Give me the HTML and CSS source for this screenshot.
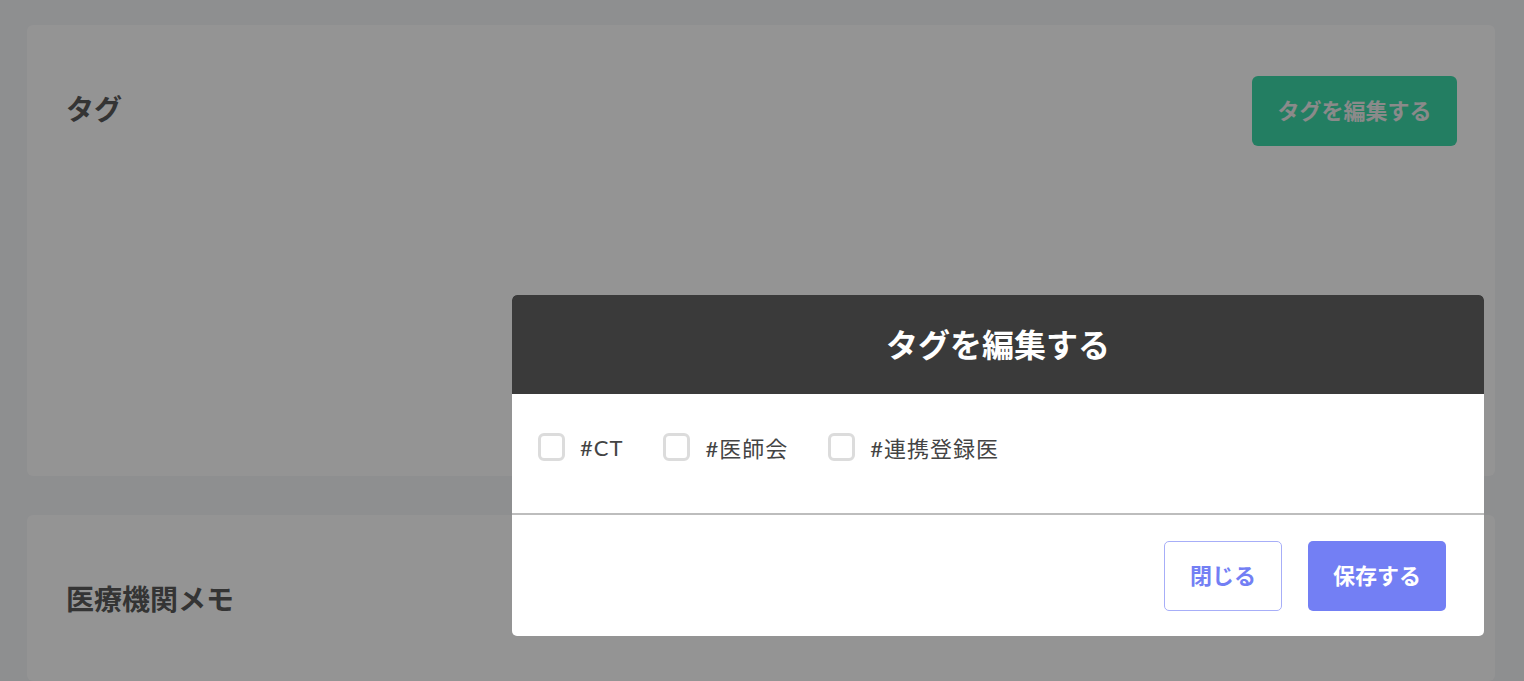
FILE: index.html
```html
<!DOCTYPE html>
<html lang="ja">
<head>
<meta charset="utf-8">
<title>タグを編集する</title>
<link rel="stylesheet" href="styles.css">
</head>
<body>
<main class="page">
  <section class="card card-tags">
    <div class="card-head">
      <h2 class="card-title">タグ</h2>
      <button class="btn-green" type="button">タグを編集する</button>
    </div>
  </section>
  <section class="card card-memo">
    <div class="card-head">
      <h2 class="card-title">医療機関メモ</h2>
    </div>
  </section>
</main>

<div class="overlay"></div>

<div class="modal">
  <div class="modal-header">タグを編集する</div>
  <div class="modal-body">
    <label class="tag"><span class="box"></span><span class="tag-text">#CT</span></label>
    <label class="tag"><span class="box"></span><span class="tag-text">#医師会</span></label>
    <label class="tag"><span class="box"></span><span class="tag-text">#連携登録医</span></label>
  </div>
  <div class="modal-footer">
    <button class="btn-outline" type="button">閉じる</button>
    <button class="btn-primary" type="button">保存する</button>
  </div>
</div>
</body>
</html>
```
FILE: styles.css
```css
* { box-sizing: border-box; }
html, body { margin: 0; padding: 0; }
body {
  width: 1524px;
  height: 681px;
  overflow: hidden;
  background: #f5f6f8;
  font-family: "Lato", "Noto Sans CJK JP", sans-serif;
  position: relative;
}
.page {
  padding: 25px 29px 0 27px;
  display: flex;
  flex-direction: column;
  gap: 39px;
}
.card {
  background: #ffffff;
  border-radius: 6px;
  padding: 48px 38px 0 39px;
}
.card-tags { height: 451px; }
.card-memo { height: 166px; }
.card-head {
  display: flex;
  justify-content: space-between;
  align-items: flex-start;
}
.card-title {
  margin: 0;
  font-size: 28px;
  line-height: 70px;
  font-weight: 700;
  color: #5a5a5a;
  font-family: "Noto Sans CJK JP", sans-serif;
}
.btn-green {
  margin-top: 3px;
  width: 205px;
  height: 70px;
  border: none;
  border-radius: 6px;
  background: #3dd9a9;
  color: #eeeeee;
  font-family: "Noto Sans CJK JP", sans-serif;
  font-weight: 700;
  font-size: 22px;
  line-height: 1;
  padding: 0 0 4px;
}
.overlay {
  position: absolute;
  inset: 0;
  background: rgba(0, 0, 0, 0.42);
}
.modal {
  position: absolute;
  left: 512px;
  top: 295px;
  width: 972px;
  height: 341px;
  background: #ffffff;
  border-radius: 5px;
  overflow: hidden;
  display: flex;
  flex-direction: column;
}
.modal-header {
  height: 99px;
  flex: none;
  background: #3a3a3a;
  color: #ffffff;
  font-family: "Noto Sans CJK JP", sans-serif;
  font-weight: 700;
  font-size: 32px;
  display: flex;
  align-items: center;
  justify-content: center;
  padding-bottom: 4px;
}
.modal-body {
  height: 121px;
  flex: none;
  border-bottom: 2px solid #bdbdbd;
  display: flex;
  align-items: center;
  gap: 40px;
  padding: 0 26px 13px;
}
.tag {
  display: flex;
  align-items: center;
  gap: 15px;
  cursor: pointer;
}
.box {
  width: 27px;
  height: 28px;
  border: 3px solid #dcdcdc;
  border-radius: 6px;
  background: #ffffff;
}
.tag-text {
  font-size: 22px;
  letter-spacing: 1px;
  color: #444444;
  font-family: "Lato", "Noto Sans CJK JP", sans-serif;
}
.modal-footer {
  flex: 1;
  display: flex;
  justify-content: flex-end;
  align-items: flex-start;
  gap: 26px;
  padding: 26px 38px 0 0;
}
.btn-outline, .btn-primary {
  height: 70px;
  border-radius: 5px;
  font-family: "Noto Sans CJK JP", sans-serif;
  font-weight: 700;
  font-size: 22px;
  line-height: 1;
  padding: 0 0 5px;
}
.btn-outline {
  width: 118px;
  background: #ffffff;
  border: 1px solid #a7aef8;
  color: #737ff4;
}
.btn-primary {
  width: 138px;
  background: #737ff4;
  border: none;
  color: #ffffff;
}
```
